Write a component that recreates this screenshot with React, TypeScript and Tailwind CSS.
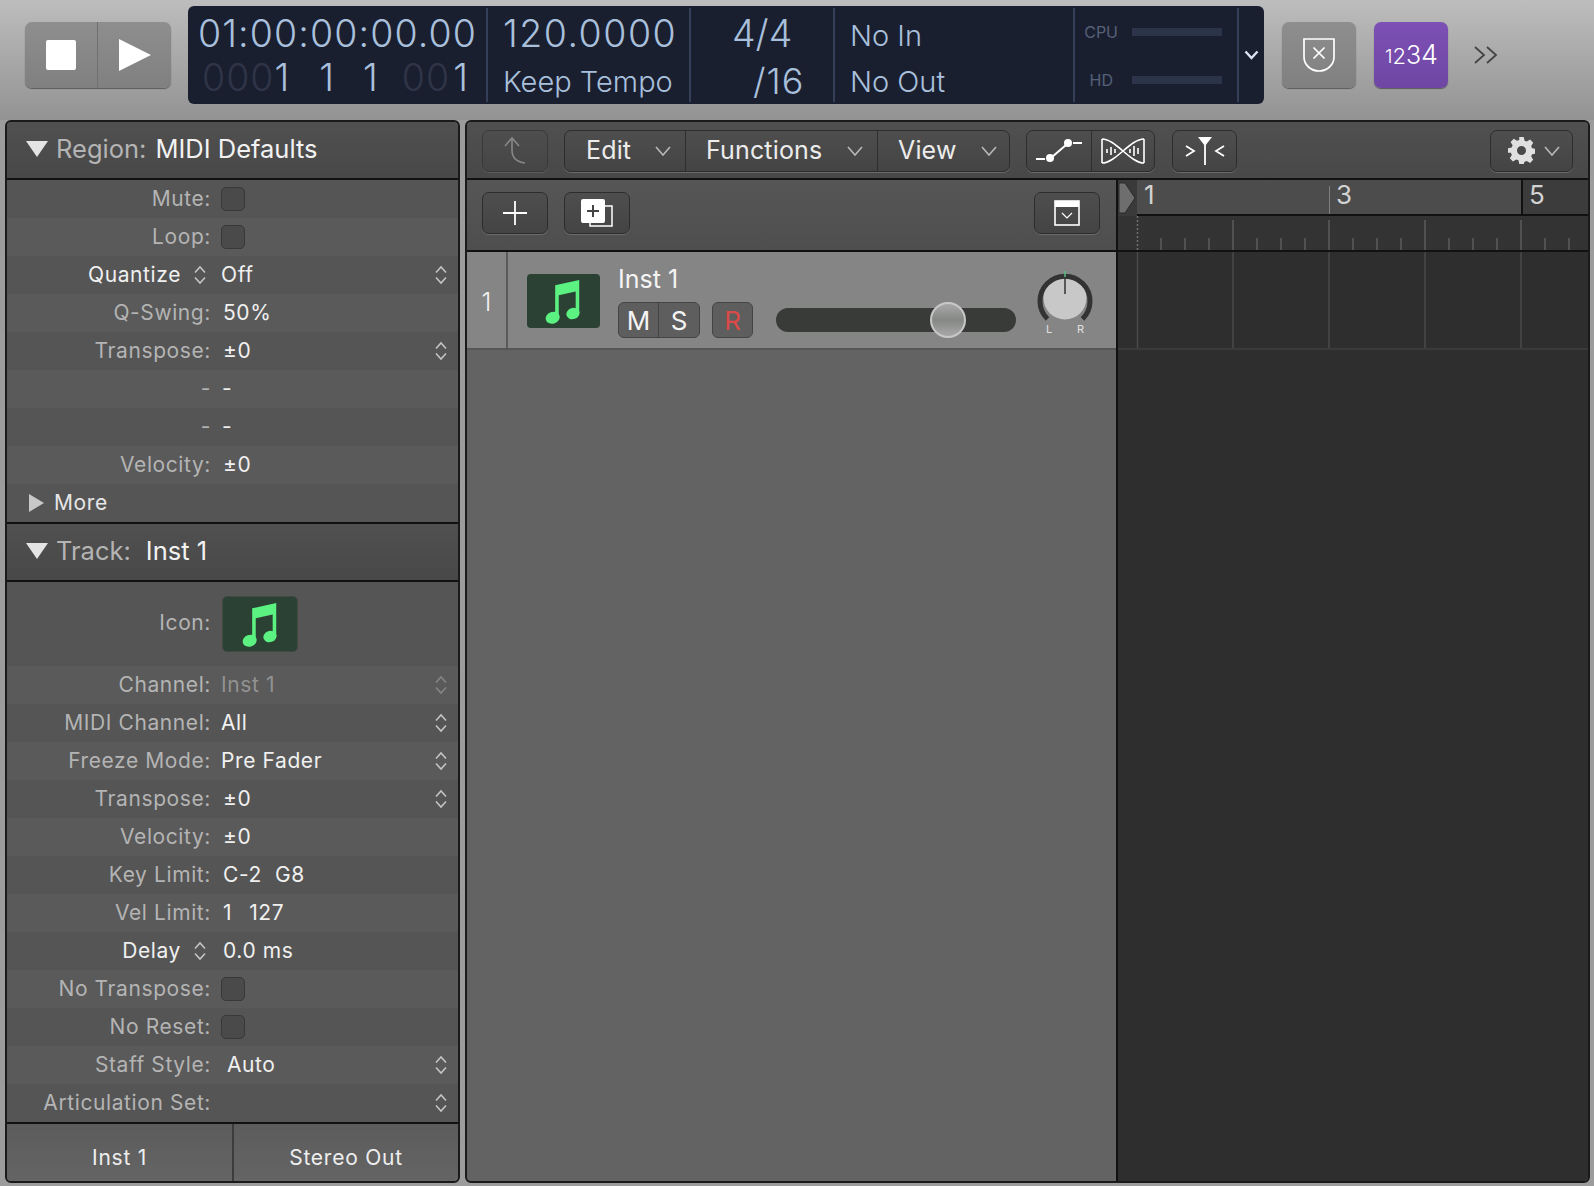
import React from "react";

const font = { fontFamily: '"Inter", "Liberation Sans", sans-serif' };

const Stepper = ({ dim = false }: { dim?: boolean }) => (
  <svg width="14" height="20" viewBox="0 0 14 20" fill="none" stroke={dim ? "#858585" : "#c4c4c4"} strokeWidth="1.6">
    <path d="M2 7.5 7 2l5 5.5" />
    <path d="M2 12.5 7 18l5-5.5" />
  </svg>
);

const Check = () => (
  <div className="w-[24px] h-[24px] rounded-[5px] bg-[#4a4a4a] border border-[#383838]" />
);

const Note = ({ className }: { className?: string }) => (
  <svg className={className} viewBox="0 0 34 44" fill="#5cf282">
    <path d="M10 7 33 2v32h-3.4V13L13.400 16.400V38H10z" />
    <ellipse cx="7.6" cy="38" rx="6.8" ry="5.6" transform="rotate(-20 7.6 38)" />
    <ellipse cx="27" cy="34" rx="6.4" ry="5.4" transform="rotate(-20 27 34)" />
  </svg>
);

type RowProps = {
  label: string;
  value?: string;
  stepper?: boolean;
  odd?: boolean;
  bright?: boolean;
  labelStepper?: boolean;
  dim?: boolean;
  check?: boolean;
  valueClass?: string;
};

const Row = ({ label, value, stepper, odd, bright, labelStepper, dim, check, valueClass }: RowProps) => (
  <div className={`h-[38px] flex items-center ${odd ? "bg-[#5a5a5a]" : "bg-[#555555]"}`}>
    <div className={`w-[204px] flex justify-end items-center text-[21px] tracking-[0.6px] ${bright ? "text-[#f0f0f0]" : "text-[#b4b4b4]"}`}>
      <span>{label}</span>
      {labelStepper && (
        <span className="ml-[12px] mr-[4px]">
          <Stepper />
        </span>
      )}
    </div>
    <div className={`ml-[10px] flex-1 text-[21px] tracking-[0.6px] ${dim ? "text-[#929292]" : "text-[#f0f0f0]"} ${valueClass ?? ""}`}>
      {check ? <Check /> : value}
    </div>
    {stepper && (
      <div className="w-[14px] mr-[10px] flex">
        <Stepper dim={dim} />
      </div>
    )}
  </div>
);

const SectionHeader = ({ label, value, gap }: { label: string; value: string; gap: string }) => (
  <div className="h-[54px] pb-[2px] bg-gradient-to-b from-[#505050] to-[#484848] border-b-2 border-[#111111] box-content flex items-center pl-[19px] text-[25.500px]">
    <svg width="22" height="16" viewBox="0 0 22 16" fill="#e4e4e4">
      <path d="M0 0h22L11 16z" />
    </svg>
    <span className="ml-[8px] text-[#b4b4b4]">{label}</span>
    <span className={`${gap} text-[#f2f2f2]`}>{value}</span>
  </div>
);

const Btn = ({ className, children }: { className?: string; children?: React.ReactNode }) => (
  <div className={`rounded-[7px] bg-gradient-to-b from-[#4e4e4e] to-[#444444] border border-[#2d2d2d] shadow-[0_1px_0_#6a6a6a] flex items-center justify-center ${className ?? ""}`}>
    {children}
  </div>
);

const Chevron = ({ color = "#b8b8b8" }: { color?: string }) => (
  <svg width="18" height="12" viewBox="0 0 18 12" fill="none" stroke={color} strokeWidth="1.6">
    <path d="M2 2l7 8 7-8" />
  </svg>
);

const MenuItem = ({ label, width, pl, pr, border }: { label: string; width: string; pl: string; pr: string; border?: boolean }) => (
  <div className={`${width} ${pl} ${pr} h-full flex items-center justify-between text-[25px] tracking-[0.15px] text-[#ececec] ${border ? "border-r border-[#2f2f2f]" : ""}`}>
    <span>{label}</span>
    <Chevron />
  </div>
);

const Divider = () => <div className="w-[2px] my-[2px] bg-[#34405a]" />;

export default function App() {
  return (
    <div style={font} className="w-[1594px] h-[1186px] overflow-hidden flex flex-col bg-[#9c9c9c]">
      {/* control bar */}
      <div className="h-[120px] pt-[6px] pl-[25px] flex items-start bg-gradient-to-b from-[#bdbdbd] to-[#939393]">
        <div className="mt-[16px] w-[146px] h-[66px] rounded-[7px] flex bg-gradient-to-b from-[#8e8e8e] to-[#808080] shadow-[0_1px_1px_#5a5a5a]">
          <div className="w-[73px] flex items-center justify-center border-r border-[#707070]">
            <div className="w-[30px] h-[30px] rounded-[2px] bg-white" />
          </div>
          <div className="flex-1 flex items-center justify-center">
            <svg width="32" height="32" viewBox="0 0 30 30" fill="white">
              <path d="M0 0l30 15L0 30z" />
            </svg>
          </div>
        </div>

        {/* LCD */}
        <div className="ml-[17px] w-[1076px] h-[98px] rounded-[6px] bg-[#1a1f30] flex text-[#a9c0dc] font-light">
          <div className="w-[298px] pl-[10px] flex flex-col">
            <div className="h-[52px] pt-[3px] flex items-center text-[37.500px] tracking-[1.100px] leading-none">01:00:00:00.00</div>
            <div className="h-[40px] flex items-center text-[37.500px] tracking-[1px] leading-none pl-[4px]">
              <span className="text-[#2f3547]">000</span>
              <span>1</span>
              <span className="ml-[29px]">1</span>
              <span className="ml-[28px]">1</span>
              <span className="ml-[23px] text-[#2f3547]">00</span>
              <span className="ml-[3px]">1</span>
            </div>
          </div>
          <Divider />
          <div className="w-[201px] pl-[15px] flex flex-col">
            <div className="h-[52px] pt-[3px] flex items-center text-[37.500px] tracking-[1.500px] leading-none">120.0000</div>
            <div className="h-[42px] pt-[4px] flex items-center text-[29px] leading-none">Keep Tempo</div>
          </div>
          <Divider />
          <div className="w-[142px] flex flex-col">
            <div className="h-[52px] pt-[3px] pl-[41px] flex items-center text-[37.500px] leading-none">4/4</div>
            <div className="h-[42px] pt-[4px] pl-[62px] flex items-center text-[36px] tracking-[1px] leading-none">/16</div>
          </div>
          <Divider />
          <div className="w-[238px] pl-[15px] flex flex-col text-[29px]">
            <div className="h-[58px] flex items-center leading-none">No In</div>
            <div className="h-[34px] flex items-center leading-none">No Out</div>
          </div>
          <Divider />
          <div className="w-[162px] pr-[2px] flex flex-col font-normal text-[16px] text-[#566079]">
            <div className="h-[52px] flex items-center">
              <span className="w-[43px] text-right">CPU</span>
              <div className="ml-[14px] w-[90px] h-[8px] bg-[#2b3448]" />
            </div>
            <div className="flex-1 flex items-center pb-[2px]">
              <span className="w-[38px] text-right">HD</span>
              <div className="ml-[19px] w-[90px] h-[8px] bg-[#2b3448]" />
            </div>
          </div>
          <Divider />
          <div className="flex-1 flex items-center justify-center">
            <svg width="15" height="10" viewBox="0 0 15 10" fill="none" stroke="#dbe4f0" strokeWidth="2.4">
              <path d="M1.5 1.5l6 6.5 6-6.5" />
            </svg>
          </div>
        </div>

        <div className="mt-[16px] ml-[18px] w-[74px] h-[66px] rounded-[7px] flex items-center justify-center bg-gradient-to-b from-[#8e8e8e] to-[#808080] shadow-[0_1px_1px_#5a5a5a]">
          <svg width="34" height="36" viewBox="0 0 34 36" fill="none" stroke="white" strokeWidth="1.7">
            <path d="M2 2h30v18c0 8-7 14-15 14S2 28 2 20z" />
            <path d="M11.5 10.5l11 11M22.5 10.5l-11 11" />
          </svg>
        </div>
        <div className="mt-[16px] ml-[18px] w-[74px] h-[66px] pt-[2px] pl-[1px] rounded-[7px] flex items-center justify-center bg-gradient-to-b from-[#7c50b4] to-[#6f46a4] shadow-[0_1px_1px_#5a5a5a] text-white font-light">
          <span className="text-[19px] mt-[3px]">1</span>
          <span className="text-[22px] mt-[1px]">2</span>
          <span className="text-[25px]">3</span>
          <span className="text-[27px] -mt-[1px]">4</span>
        </div>
        <div className="mt-[16px] ml-[26px] h-[66px] flex items-center">
          <svg width="24" height="20" viewBox="0 0 24 20" fill="none" stroke="#444444" strokeWidth="1.8">
            <path d="M1 2l9 8-9 8M13 2l9 8-9 8" />
          </svg>
        </div>
      </div>

      <div className="flex-1 flex pl-[5px] gap-[5px]">
        {/* inspector */}
        <div className="w-[455px] h-[1063px] rounded-[6px] border-2 border-[#1a1a1a] overflow-hidden flex flex-col bg-[#555555]">
          <SectionHeader label="Region:" value="MIDI Defaults" gap="ml-[9px]" />
          <Row label="Mute:" check />
          <Row label="Loop:" check odd />
          <Row label="Quantize" value="Off" stepper bright labelStepper />
          <Row label="Q-Swing:" value="50%" odd valueClass="ml-[12px]" />
          <Row label="Transpose:" value="±0" stepper valueClass="ml-[12px]" />
          <Row label="-" value="-" odd valueClass="ml-[11px]" />
          <Row label="-" value="-" valueClass="ml-[11px]" />
          <Row label="Velocity:" value="±0" odd valueClass="ml-[12px]" />
          <div className="h-[38px] flex items-center pl-[22px] text-[21px] text-[#e6e6e6] tracking-[0.6px] bg-[#555555]">
            <svg width="15" height="18" viewBox="0 0 15 18" fill="#c8c8c8">
              <path d="M0 0l15 9-15 9z" />
            </svg>
            <span className="ml-[10px]">More</span>
          </div>
          <div className="border-t-2 border-[#111111]" />
          <SectionHeader label="Track:" value="Inst 1" gap="ml-[15px]" />
          <div className="h-[84px] flex items-start bg-[#555555] pt-[14px]">
            <div className="w-[204px] text-right text-[21px] text-[#b4b4b4] tracking-[0.6px] pt-[11px]">Icon:</div>
            <div className="ml-[11px] w-[76px] h-[56px] rounded-[5px] bg-[#2a4134] border border-[#3f4a43] flex items-center justify-center">
              <Note className="w-[37px] h-[46px] -ml-[2px]" />
            </div>
          </div>
          <Row label="Channel:" value="Inst 1" stepper odd dim />
          <Row label="MIDI Channel:" value="All" stepper />
          <Row label="Freeze Mode:" value="Pre Fader" stepper odd />
          <Row label="Transpose:" value="±0" stepper valueClass="ml-[12px]" />
          <Row label="Velocity:" value="±0" odd valueClass="ml-[12px]" />
          <Row label="Key Limit:" value="C-2  G8" valueClass="ml-[12px] whitespace-pre" />
          <Row label="Vel Limit:" value="1  127" odd valueClass="ml-[12px] whitespace-pre [word-spacing:2px]" />
          <Row label="Delay" value="0.0 ms" bright labelStepper valueClass="ml-[12px]" />
          <Row label="No Transpose:" check odd />
          <Row label="No Reset:" check />
          <Row label="Staff Style:" value="Auto" stepper odd valueClass="ml-[16px]" />
          <Row label="Articulation Set:" stepper />
          <div className="border-t-2 border-[#111111]" />
          <div className="flex-1 flex bg-gradient-to-b from-[#5c5c5c] to-[#646464] text-[21px] text-[#eeeeee] tracking-[0.75px]">
            <div className="w-[227px] flex items-center justify-center pt-[10px] border-r-2 border-[#3c3c3c]">Inst 1</div>
            <div className="flex-1 flex items-center justify-center pt-[10px]">Stereo Out</div>
          </div>
        </div>

        {/* main window */}
        <div className="w-[1125px] h-[1063px] rounded-[6px] border-2 border-[#1a1a1a] overflow-hidden flex flex-col bg-[#636363]">
          <div className="h-[58px] shrink-0 border-b-2 border-[#111111] bg-gradient-to-b from-[#505050] to-[#484848] flex items-center pt-[1px] pl-[15px] pr-[15px]">
            <Btn className="w-[66px] h-[42px] opacity-60">
              <svg width="26" height="30" viewBox="0 0 26 30" fill="none" stroke="#b0b0b0" strokeWidth="1.6">
                <path d="M3 10l7-8 7 8M10 2v12c0 8 5 12 13 13" />
              </svg>
            </Btn>
            <Btn className="ml-[16px] w-[446px] h-[42px] !justify-start">
              <MenuItem label="Edit" width="w-[121px]" pl="pl-[21px]" pr="pr-[13px]" border />
              <MenuItem label="Functions" width="w-[192px]" pl="pl-[20px]" pr="pr-[13px]" border />
              <MenuItem label="View" width="flex-1" pl="pl-[20px]" pr="pr-[11px]" />
            </Btn>
            <Btn className="ml-[16px] w-[129px] h-[42px]">
              <div className="w-[65px] h-full flex items-center justify-center border-r border-[#2f2f2f]">
                <svg width="46" height="24" viewBox="0 0 46 24" fill="none" stroke="white" strokeWidth="2">
                  <path d="M0 20h9M37 4h9M16 18 30 6" />
                  <circle cx="14" cy="19" r="4" fill="white" stroke="none" />
                  <circle cx="32" cy="4" r="4" fill="white" stroke="none" />
                </svg>
              </div>
              <div className="flex-1 flex items-center justify-center">
                <svg width="44" height="28" viewBox="0 0 44 28" fill="none" stroke="white" strokeWidth="1.6">
                  <path d="M1 2v24M43 2v24M1 2c14 0 28 24 42 24M1 26C15 26 29 2 43 2" />
                  <path d="M6 12v4M10 10v8M14 12v4M29 12v4M33 9v10M37 11v6" />
                </svg>
              </div>
            </Btn>
            <Btn className="ml-[17px] w-[65px] h-[42px]">
              <svg width="40" height="28" viewBox="0 0 40 28" fill="none" stroke="white" strokeWidth="1.8">
                <path d="M1 9l8 5-8 5M39 9l-8 5 8 5M20 8v20" />
                <path d="M13 0h14l-7 9z" fill="white" stroke="none" />
              </svg>
            </Btn>
            <Btn className="ml-auto w-[83px] h-[42px] gap-[8px] pl-[5px]">
              <svg width="27" height="27" viewBox="0 0 24 24" fill="#e0e0e0">
                <path d="M10 0h4l.7 3.3 2 .8L19.6 2.300l2.800 2.800-1.800 2.900.8 2 3.300.7v4l-3.300.7-.8 2 1.800 2.900-2.800 2.800-2.900-1.800-2 .8L14 24h-4l-.7-3.300-2-.8-2.900 1.800-2.800-2.800 1.800-2.900-.8-2L0 14v-4l3.300-.7.8-2L2.300 4.400l2.800-2.800 2.900 1.800 2-.8zM12 8a4 4 0 100 8 4 4 0 000-8z" fillRule="evenodd" />
              </svg>
              <Chevron />
            </Btn>
          </div>

          <div className="flex-1 flex">
            <div className="w-[649px] flex flex-col border-r-2 border-[#111111] box-content">
              <div className="h-[66px] pb-[4px] border-b-2 border-[#111111] box-content bg-gradient-to-b from-[#565656] to-[#4e4e4e] flex items-center pl-[15px] pr-[16px]">
                <Btn className="w-[66px] h-[42px]">
                  <svg width="26" height="26" viewBox="0 0 26 26" stroke="white" strokeWidth="1.8">
                    <path d="M13 1v24M1 13h24" />
                  </svg>
                </Btn>
                <Btn className="ml-[16px] w-[66px] h-[42px]">
                  <svg width="32" height="28" viewBox="0 0 32 28" fill="none" stroke="white" strokeWidth="1.5">
                    <path d="M24 7h7v20H9v-3" />
                    <rect x="0" y="0" width="24" height="24" rx="2" fill="white" stroke="none" />
                    <path d="M12 6v12M6 12h12" stroke="#444444" strokeWidth="2" />
                  </svg>
                </Btn>
                <Btn className="ml-auto w-[66px] h-[42px]">
                  <svg width="26" height="26" viewBox="0 0 26 26" fill="none" stroke="white" strokeWidth="1.6">
                    <rect x="1" y="1" width="24" height="24" />
                    <path d="M1 4h24" strokeWidth="6" />
                    <path d="M8 13l5 5 5-5" strokeWidth="1.2" />
                  </svg>
                </Btn>
              </div>

              {/* track header */}
              <div className="h-[96px] border-b-2 border-[#565656] box-content bg-[#858585] flex">
                <div className="w-[39px] pt-[5px] border-r-2 border-[#5a5a5a] box-content flex items-center justify-center text-[25px] text-[#f2f2f2] font-light">1</div>
                <div className="ml-[19px] mt-[22px] w-[73px] h-[54px] rounded-[4px] bg-[#2a4134] flex items-center justify-center">
                  <Note className="w-[37px] h-[46px] -ml-[2px]" />
                </div>
                <div className="ml-[18px] flex flex-col">
                  <div className="h-[50px] flex items-center text-[25px] text-[#f4f4f4] pt-[6px]">Inst 1</div>
                  <div className="flex">
                    <div className="w-[82px] h-[36px] rounded-[6px] bg-[#5e5e5e] border border-[#444444] flex text-[26px] text-[#f4f4f4]">
                      <div className="w-[40px] flex items-center justify-center border-r border-[#444444]">M</div>
                      <div className="flex-1 flex items-center justify-center">S</div>
                    </div>
                    <div className="ml-[12px] w-[41px] h-[36px] rounded-[6px] bg-[#5e5e5e] border border-[#444444] flex items-center justify-center text-[26px] text-[#dc4a48]">R</div>
                  </div>
                </div>
                <div className="relative ml-[23px] mt-[56px] w-[240px] h-[24px] rounded-full bg-[#383b38]">
                  <div className="absolute left-[154px] -top-[6px] w-[36px] h-[36px] rounded-full border-2 border-[#c8c8c8] bg-gradient-to-b from-[#a8a8a8] via-[#858885] to-[#a8a8a8]" />
                </div>
                <div className="ml-[20px] mt-[17px] flex flex-col items-center">
                  <svg width="58" height="58" viewBox="0 0 58 58" fill="none">
                    <circle cx="29" cy="29" r="21.500" fill="#c8c8c8" />
                    <path d="M11.500 50A25 25 0 1 1 46.500 50" stroke="#333333" strokeWidth="5" />
                    <path d="M29 2v6" stroke="#55c080" strokeWidth="1.500" />
                    <path d="M29 8v17" stroke="#333333" strokeWidth="1.500" />
                  </svg>
                  <div className="w-[38px] -mt-[3px] flex justify-between text-[11px] leading-none text-[#e0e0e0]">
                    <span>L</span>
                    <span>R</span>
                  </div>
                </div>
              </div>
            </div>

            {/* arrange area */}
            <div className="flex-1 flex flex-col bg-[#2e2e2e]">
              <div className="h-[70px] border-b-2 border-[#111111] box-content bg-[#333333] flex flex-col relative">
                <svg className="absolute left-0 top-[2px]" width="18" height="32" viewBox="0 0 18 32" fill="#6e6e6e" stroke="#2a2a2a" strokeWidth="1">
                  <path d="M1 1h6l10 15L7 31H1z" />
                </svg>
                <div className="h-[36px] flex">
                  <div className="w-[19px] bg-[#3a3a3a]" />
                  <div className="w-[192px] bg-[#4c4c4c] border-b-2 border-[#111111] pl-[7px] text-[26px] leading-[30px] text-[#d2d2d2]">1</div>
                  <div className="w-[192px] bg-[#4c4c4c] border-b-2 border-[#111111] pl-[7px] text-[26px] leading-[30px] text-[#d2d2d2] relative">
                    <div className="absolute left-0 top-[6px] bottom-0 w-[1px] bg-[#808080]" />3
                  </div>
                  <div className="flex-1 bg-[#3c3c3c] border-l-2 border-b-2 border-[#111111] pl-[6px] text-[26px] leading-[30px] text-[#d2d2d2]">5</div>
                </div>
                <svg width="467" height="34" viewBox="0 0 467 34" stroke="#5c5c5c" strokeWidth="1.500">
                  <path d="M19.500 0V34" stroke="#707070" strokeDasharray="2 2" />
                  <path d="M115 4V34M211 4V34M307 4V34M403 4V34" />
                  <path d="M43 22V34M67 22V34M91 22V34M139 22V34M163 22V34M187 22V34M235 22V34M259 22V34M283 22V34M331 22V34M355 22V34M379 22V34M427 22V34M451 22V34" />
                </svg>
              </div>
              <div className="h-[96px] border-b-2 border-[#3a3a3a] box-content">
                <svg width="467" height="96" viewBox="0 0 467 96" stroke="#4a4a4a" strokeWidth="1.500">
                  <path d="M19.500 0V96M115 0V96M211 0V96M307 0V96M403 0V96" />
                </svg>
              </div>
            </div>
          </div>
        </div>
      </div>
    </div>
  );
}
